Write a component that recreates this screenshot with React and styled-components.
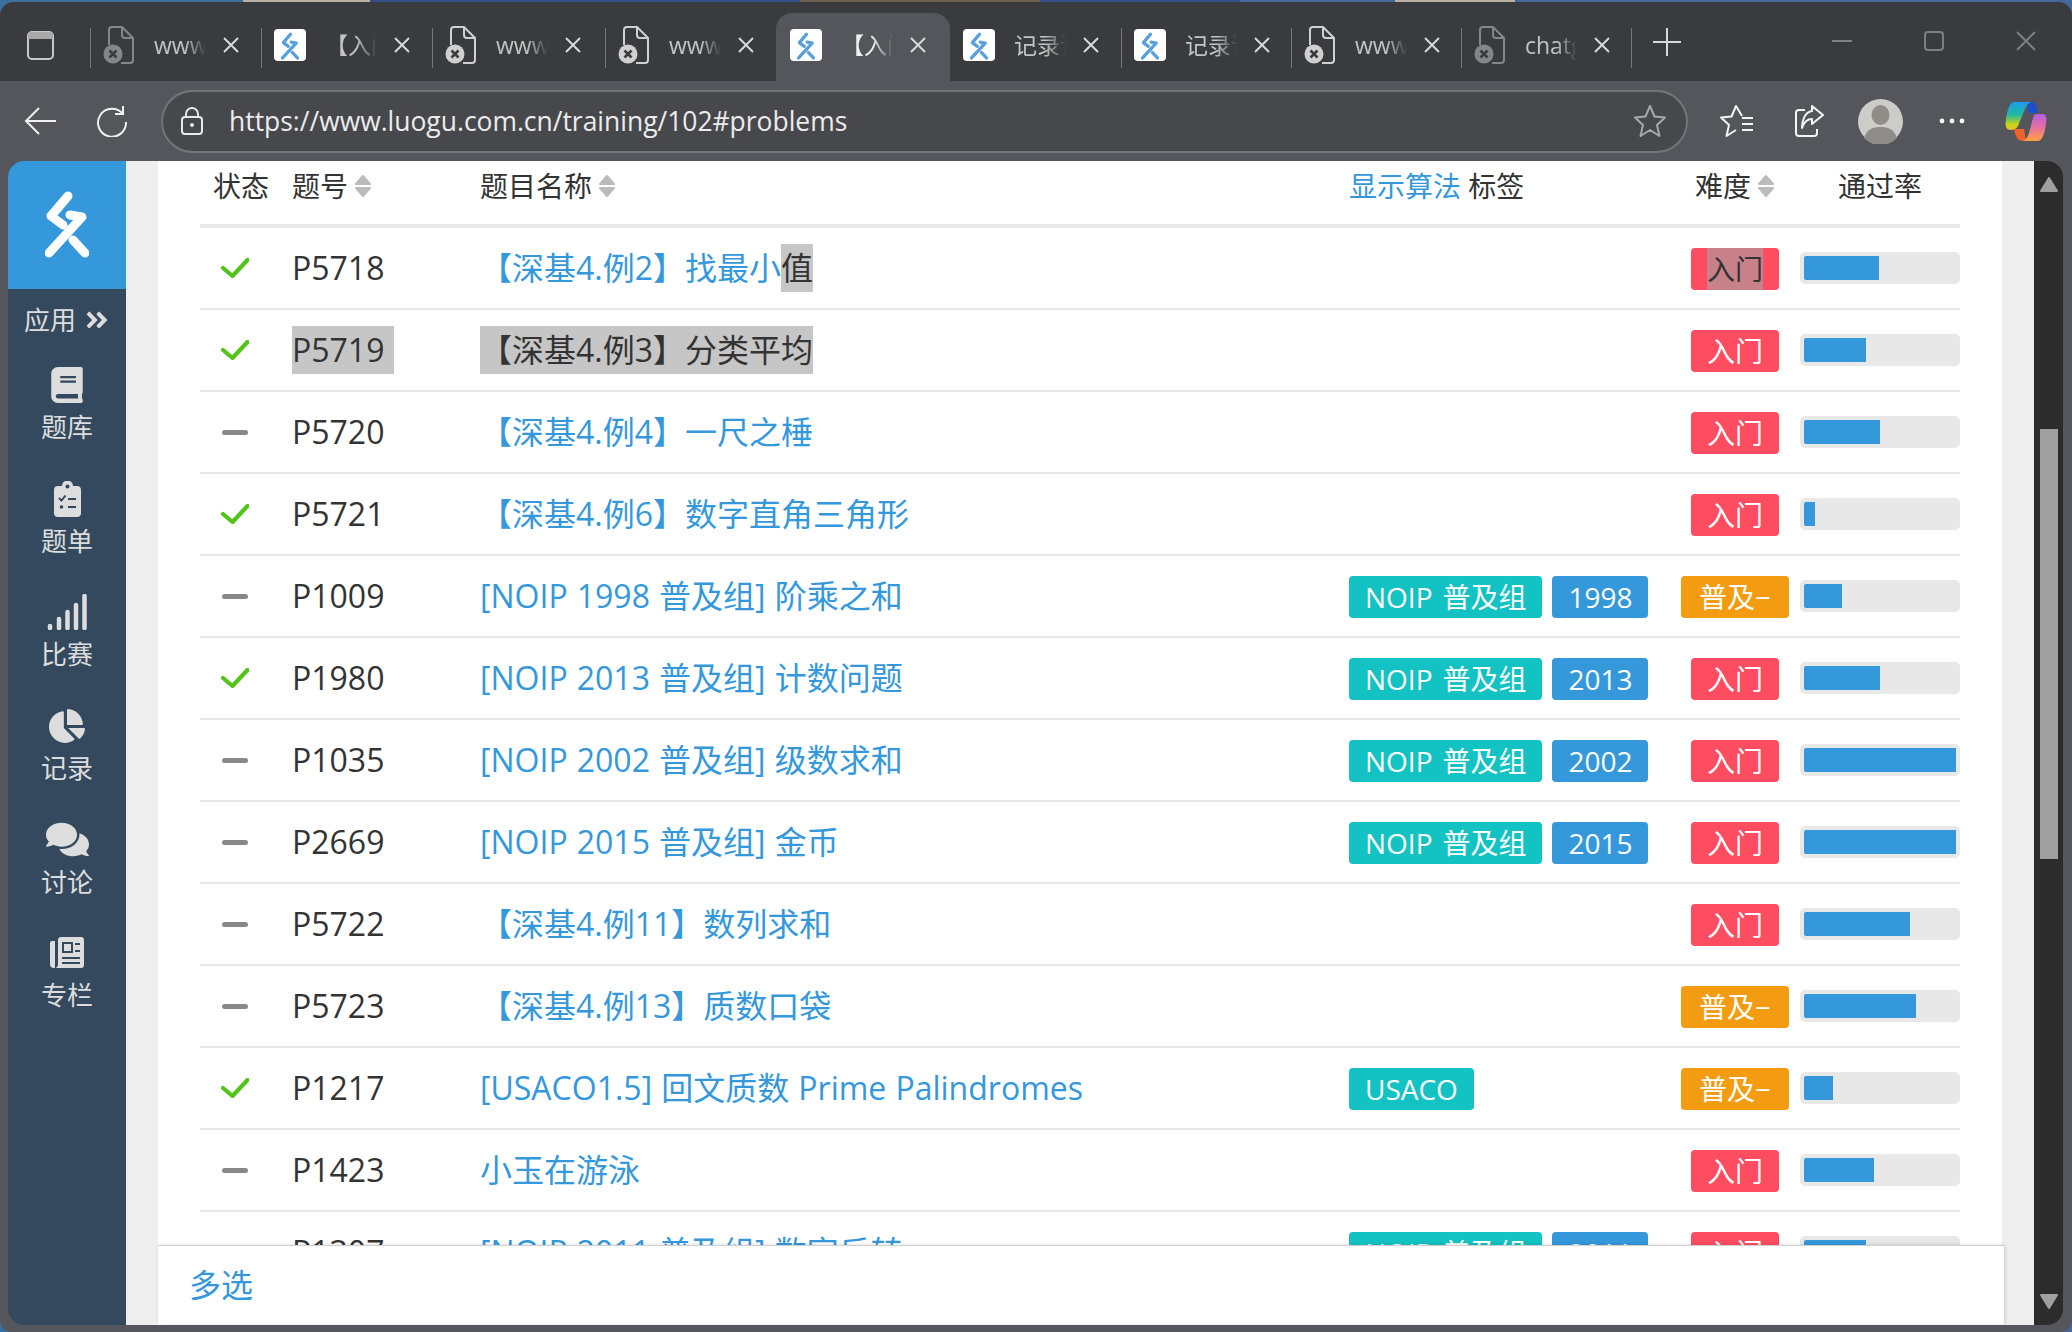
import styled, { createGlobalStyle } from "styled-components";
import { FaAngleDoubleRight, FaBook, FaChartPie, FaComments } from "react-icons/fa";

const GlobalStyle = createGlobalStyle`
  html, body {
    margin: 0;
    padding: 0;
    overflow: hidden;
  }
  * {
    box-sizing: border-box;
  }
`;

const Desktop = styled.div`
  width: 2072px;
  height: 1332px;
  padding-top: 2px;
  overflow: hidden;
  font-family: "Open Sans", "Noto Sans CJK SC", sans-serif;
  color: #333;
  background: linear-gradient(
    90deg,
    #3d6f9d 0 243px,
    #b8b0a0 243px 370px,
    #34508a 370px 800px,
    #6b5f50 800px 1040px,
    #34508a 1040px 1240px,
    #43689a 1240px 1395px,
    #b8b0a0 1395px 1515px,
    #43689a 1515px
  );
`;

const Window = styled.div`
  width: 100%;
  height: 1330px;
  display: flex;
  flex-direction: column;
  border-radius: 14px 14px 12px 12px;
  overflow: hidden;
  background: #55565b;
`;

/* tab strip */
const TabBar = styled.div`
  height: 79px;
  flex-shrink: 0;
  display: flex;
  align-items: flex-end;
  padding-left: 27px;
  background: #3a3b3f;
`;

const PanelButton = styled.svg`
  width: 27px;
  height: 29px;
  margin-right: 36px;
  align-self: flex-start;
  margin-top: 29px;
`;

const Tab = styled.div`
  position: relative;
  width: ${(p) => p.$w}px;
  height: 68px;
  flex-shrink: 0;
  display: flex;
  align-items: flex-start;
  padding: 16px 0 0 ${(p) => (p.$active ? 14 : 13)}px;
  border-radius: 16px 16px 0 0;
  background: ${(p) => (p.$active ? "#55565b" : "transparent")};
  color: ${(p) => (p.$active ? "#f0f0f0" : "#c4c4c4")};

  &::before {
    content: "";
    display: ${(p) => (p.$sep ? "block" : "none")};
    position: absolute;
    left: 0;
    top: 15px;
    width: 1px;
    height: 40px;
    background: #77787c;
  }
`;

const FaviconBox = styled.div`
  width: 32px;
  height: 32px;
  flex-shrink: 0;
  display: flex;
  align-items: center;
  justify-content: center;
  border-radius: 4px;
  background: #fff;
`;

const TabTitle = styled.div`
  width: 52px;
  margin-left: 19px;
  flex-shrink: 0;
  overflow: hidden;
  white-space: nowrap;
  font-size: 23px;
  line-height: 32px;
  -webkit-mask-image: linear-gradient(90deg, #000 60%, transparent 100%);
  mask-image: linear-gradient(90deg, #000 60%, transparent 100%);
`;

const CloseIcon = styled.svg`
  width: 18px;
  height: 18px;
  margin: 7px 0 0 16px;
  flex-shrink: 0;
`;

const NewTab = styled.div`
  position: relative;
  width: 72px;
  height: 68px;
  flex-shrink: 0;
  display: flex;
  justify-content: center;
  padding-top: 15px;

  &::before {
    content: "";
    position: absolute;
    left: 0;
    top: 15px;
    width: 1px;
    height: 40px;
    background: #77787c;
  }
`;

const WindowButtons = styled.div`
  margin-left: auto;
  align-self: flex-start;
  margin-top: 19px;
  display: flex;
`;

const WindowButton = styled.div`
  width: 92px;
  height: 40px;
  display: flex;
  align-items: center;
  justify-content: center;
`;

/* address row */
const Toolbar = styled.div`
  height: 80px;
  flex-shrink: 0;
  display: flex;
  align-items: center;
  padding-left: 24px;
  background: #55565b;
`;

const ToolIcon = styled.svg`
  flex-shrink: 0;
  margin-left: ${(p) => p.$ml || 0}px;
`;

const AddressBar = styled.div`
  width: 1527px;
  height: 63px;
  margin-left: 33px;
  flex-shrink: 0;
  display: flex;
  align-items: center;
  padding: 0 20px 0 17px;
  border: 2px solid #747579;
  border-radius: 32px;
  background: #47484c;
`;

const Url = styled.div`
  flex: 1;
  margin-left: 25px;
  font-size: 26.45px;
  color: #ececec;
`;

/* page area */
const Body = styled.div`
  flex: 1;
  min-height: 0;
  display: flex;
  padding: 0 9px 7px 8px;
`;

const Sidebar = styled.nav`
  width: 118px;
  flex-shrink: 0;
  display: flex;
  flex-direction: column;
  border-radius: 16px 0 0 16px;
  overflow: hidden;
  background: #34495e;
  color: #ddd;
`;

const LogoBlock = styled.div`
  height: 128px;
  flex-shrink: 0;
  display: flex;
  align-items: center;
  justify-content: center;
  padding-bottom: 4px;
  background: #3498db;
`;

const AppsRow = styled.div`
  height: 71px;
  flex-shrink: 0;
  display: flex;
  align-items: center;
  justify-content: center;
  gap: 8px;
  padding-bottom: 9px;
  font-size: 26px;
  line-height: 32px;
`;

const NavItem = styled.div`
  height: 113.7px;
  flex-shrink: 0;
  display: flex;
  flex-direction: column;
  align-items: center;
  padding-top: 7px;
`;

const NavIcon = styled.div`
  height: 36px;
  display: flex;
  align-items: center;
  justify-content: center;
`;

const NavLabel = styled.div`
  margin-top: 8px;
  font-size: 26px;
  line-height: 32px;
`;

const Content = styled.main`
  position: relative;
  flex: 1;
  min-width: 0;
  padding: 0 32px;
  overflow: hidden;
  background: #eee;
`;

const Card = styled.div`
  height: 100%;
  padding: 0 42px;
  background: #fff;
  overflow: hidden;
`;

const Columns = styled.div`
  display: grid;
  grid-template-columns: 92px 188px 869px 331px 120px 160px;
  align-items: center;
`;

const HeadRow = styled(Columns)`
  height: 67px;
  padding-bottom: 14px;
  border-bottom: 4px solid #e8e8e8;
  font-size: 28px;
  line-height: 38px;
`;

const HeadCell = styled.div`
  display: flex;
  align-items: center;
  justify-content: ${(p) => (p.$center ? "center" : "flex-start")};
  padding-left: ${(p) => p.$pl || 0}px;
  padding-right: ${(p) => p.$pr || 0}px;
  gap: ${(p) => p.$gap || 0}px;
  white-space: pre;
`;

const BlueText = styled.span`
  color: #3498db;
`;

const Row = styled(Columns)`
  height: 82px;
  border-bottom: 2px solid #e8e8e8;
  font-size: 32px;
  line-height: 48px;
  word-spacing: 0.8px;
`;

const StatusCell = styled.div`
  width: 70px;
  display: flex;
  justify-content: center;
`;

const Dash = styled.div`
  width: 26px;
  height: 5px;
  border-radius: 3px;
  background: #888;
`;

const NumberCell = styled.div`
  white-space: pre;
`;

const Picked = styled.span`
  display: inline-block;
  background: #c6c6c6;
  color: #333;
  height: 48px;
  white-space: pre;
`;

const TitleLink = styled.div`
  color: #3498db;
  white-space: nowrap;
`;

const TagCell = styled.div`
  display: flex;
  gap: 10px;
  padding-top: 2px;
`;

const Chip = styled.span`
  display: inline-block;
  height: 42px;
  padding: 0 ${(p) => p.$px || 16}px;
  border-radius: 4px;
  font-size: 28px;
  line-height: 42px;
  word-spacing: 2.6px;
  color: #fff;
  background: ${(p) => p.$bg};
  white-space: nowrap;
`;

const PickedChipText = styled.span`
  display: inline-block;
  height: 42px;
  background: #c88089;
  color: #333;
`;

const DiffCell = styled.div`
  display: flex;
  justify-content: center;
  padding-right: 10px;
  padding-top: 2px;
`;

const RateBar = styled.div`
  height: 32px;
  padding: 4px;
  border-radius: 5px;
  background: #e8e8e8;
`;

const RateFill = styled.div`
  height: 24px;
  border-radius: 2px 0 0 2px;
  background: #3498db;
`;

const Footer = styled.div`
  position: absolute;
  left: 32px;
  right: 30px;
  bottom: 1px;
  height: 79px;
  display: flex;
  align-items: center;
  padding-left: 31px;
  padding-bottom: 4px;
  border-top: 1px solid #d0d0d0;
  background: #fff;
  box-shadow: 1px 0 4px rgba(0, 0, 0, 0.15);
  font-size: 32px;
  color: #3498db;
`;

const Scrollbar = styled.div`
  width: 29px;
  flex-shrink: 0;
  display: flex;
  flex-direction: column;
  align-items: center;
  padding: 16px 0;
  border-radius: 0 16px 16px 0;
  background: #2c2c2c;
`;

const Thumb = styled.div`
  width: 18px;
  height: 430px;
  margin-top: 236px;
  background: #a0a0a0;
`;

const ArrowDown = styled.svg`
  margin-top: auto;
`;

const Logo = ({ color = "#fff", width = 44, height = 70, sw = 9 }) => (
  <svg width={width} height={height} viewBox="15 8 44 70">
    <g fill="none" stroke={color} strokeWidth={sw} strokeLinecap="round" strokeLinejoin="round">
      <path d="M38 16 L21 36 L33 45" />
      <path d="M40 35 L52 37 L19 73" />
      <path d="M43 60 L55 73" />
    </g>
  </svg>
);

const FileIcon = ({ dim }) => (
  <svg width="32" height="40" viewBox="0 0 32 40" opacity={dim ? 0.5 : 1} style={{ flexShrink: 0, marginTop: -4 }}>
    <path d="M6 20 V5 a3 3 0 0 1 3-3 H19 L30 13 V35 a3 3 0 0 1-3 3 H18 M19 2 V10 a3 3 0 0 0 3 3 H30" fill="none" stroke="#d0d0d0" strokeWidth="2" />
    <circle cx="10" cy="29" r="9.5" fill="#d0d0d0" />
    <path d="M6.5 25.5 L13.5 32.5 M13.5 25.5 L6.5 32.5" stroke="#3a3b3f" strokeWidth="2.6" />
  </svg>
);

const Close = () => (
  <CloseIcon viewBox="0 0 18 18">
    <path d="M2 2 L16 16 M16 2 L2 16" stroke="#d8d8d8" strokeWidth="2" />
  </CloseIcon>
);

const STAR = "16,1 20.5,11.5 31,12.5 23,20 25.5,31 16,25 6.5,31 9,20 1,12.5 11.5,11.5";

const Copilot = () => (
  <ToolIcon $ml={38} width="44" height="42" viewBox="16 9 44 42">
    <defs>
      <linearGradient id="cpLeft" x1="0" y1="0" x2="0" y2="1">
        <stop offset="0" stopColor="#1d9bf0" />
        <stop offset="0.45" stopColor="#20b8a0" />
        <stop offset="0.8" stopColor="#c8d418" />
        <stop offset="1" stopColor="#e8c820" />
      </linearGradient>
      <linearGradient id="cpRight" x1="0" y1="0" x2="0" y2="1">
        <stop offset="0" stopColor="#b45ee0" />
        <stop offset="0.5" stopColor="#e870a0" />
        <stop offset="1" stopColor="#ffa040" />
      </linearGradient>
    </defs>
    <path d="M40 11 H44 Q48 11 50 22 H40 Z" fill="#1a50d0" />
    <path d="M26 38 H36 L38 50 H34 Q28 50 26 38 Z" fill="#f0602a" />
    <path d="M25 11 H43 Q39 12 36 20 L30 35 Q28 39 22 39 Q16 39 18 28 Q20 13 25 11 Z" fill="url(#cpLeft)" />
    <path d="M47 23 H54 Q60 23 58 33 Q56 48 51 50 H35 Q39 48 41 42 L45 27 Q46 24 47 23 Z" fill="url(#cpRight)" />
  </ToolIcon>
);

const TABS = [
  { w: 171, icon: "file", dim: true, title: "www.luogu" },
  { w: 171, icon: "logo", title: "【入门" },
  { w: 173, icon: "file", title: "www.luogu" },
  { w: 171, icon: "file", title: "www.luogu" },
  { w: 174, icon: "logo", title: "【入门", active: true },
  { w: 171, icon: "logo", title: "记录详情", nosep: true },
  { w: 170, icon: "logo", title: "记录详情" },
  { w: 170, icon: "file", title: "www.luogu" },
  { w: 170, icon: "file", dim: true, title: "chatgpt" },
];

const NAV = [
  { label: "题库", icon: <FaBook size={36} /> },
  {
    label: "题单",
    icon: (
      <svg width="27" height="36" viewBox="0 0 27 36">
        <path d="M4 5 H8 a5.5 5.5 0 0 1 11 0 H23 a4 4 0 0 1 4 4 V32 a4 4 0 0 1-4 4 H4 a4 4 0 0 1-4-4 V9 a4 4 0 0 1 4-4 Z" fill="#ddd" />
        <circle cx="13.5" cy="5.5" r="2" fill="#34495e" />
        <path d="M5 17 L7.5 19.5 L11.5 14.5 M14 18 H22 M14 26 H22" fill="none" stroke="#34495e" strokeWidth="2" />
        <circle cx="7.5" cy="26" r="1.8" fill="#34495e" />
      </svg>
    ),
  },
  {
    label: "比赛",
    icon: (
      <svg width="40" height="36" viewBox="0 0 40 36">
        <g stroke="#ddd" strokeWidth="4.5" strokeLinecap="round">
          <path d="M3 32 V34" />
          <path d="M12 25 V34" />
          <path d="M20.5 18 V34" />
          <path d="M29 11 V34" />
          <path d="M37.5 2 V34" />
        </g>
      </svg>
    ),
  },
  { label: "记录", icon: <FaChartPie size={36} /> },
  { label: "讨论", icon: <FaComments size={43} /> },
  {
    label: "专栏",
    icon: (
      <svg width="36" height="32" viewBox="0 0 36 32">
        <path d="M6 4 H3 a2 2 0 0 0-2 2 V27 a4 4 0 0 0 4 4 H6 Z" fill="#ddd" />
        <path d="M9 3 a3 3 0 0 1 3-3 H32 a3 3 0 0 1 3 3 V28 a3 3 0 0 1-3 3 H7 a4 4 0 0 0 2-4 Z" fill="#ddd" />
        <rect x="14" y="6" width="9" height="9" fill="none" stroke="#34495e" strokeWidth="2" />
        <path d="M26 7 H31 M26 14 H31 M13 21 H31 M13 26 H31" stroke="#34495e" strokeWidth="2" />
      </svg>
    ),
  },
];

const NOIP = "NOIP 普及组";

const PROBLEMS = [
  { id: "P5718", title: "【深基4.例2】找最小", titleEnd: "值", diff: "入门", rate: 49.5, ok: true, pickedDiff: true },
  { id: "P5719", title: "【深基4.例3】分类平均", diff: "入门", rate: 41, ok: true, picked: true },
  { id: "P5720", title: "【深基4.例4】一尺之棰", diff: "入门", rate: 50 },
  { id: "P5721", title: "【深基4.例6】数字直角三角形", diff: "入门", rate: 7, ok: true },
  { id: "P1009", title: "[NOIP 1998 普及组] 阶乘之和", tags: [NOIP, "1998"], diff: "普及−", rate: 25 },
  { id: "P1980", title: "[NOIP 2013 普及组] 计数问题", tags: [NOIP, "2013"], diff: "入门", rate: 50, ok: true },
  { id: "P1035", title: "[NOIP 2002 普及组] 级数求和", tags: [NOIP, "2002"], diff: "入门", rate: 100 },
  { id: "P2669", title: "[NOIP 2015 普及组] 金币", tags: [NOIP, "2015"], diff: "入门", rate: 100 },
  { id: "P5722", title: "【深基4.例11】数列求和", diff: "入门", rate: 70 },
  { id: "P5723", title: "【深基4.例13】质数口袋", diff: "普及−", rate: 74 },
  { id: "P1217", title: "[USACO1.5] 回文质数 Prime Palindromes", tags: ["USACO"], diff: "普及−", rate: 19, ok: true },
  { id: "P1423", title: "小玉在游泳", diff: "入门", rate: 46 },
  { id: "P1307", title: "[NOIP 2011 普及组] 数字反转", tags: [NOIP, "2011"], diff: "入门", rate: 41 },
];

const SortIcon = () => (
  <svg width="18" height="24" viewBox="0 0 18 24">
    <path d="M9 2 L16 10 H2 Z M2 14 H16 L9 22 Z" fill="#bbb" stroke="#bbb" strokeWidth="2" strokeLinejoin="round" />
  </svg>
);

const Check = () => (
  <svg width="28" height="20" viewBox="0 0 28 20">
    <path d="M2 10 L11.5 18 L26.5 2" fill="none" stroke="#52c41a" strokeWidth="4.2" strokeLinecap="round" strokeLinejoin="round" />
  </svg>
);

const isYear = (t) => /^\d+$/.test(t);

const App = () => {
  return (
    <Desktop>
      <GlobalStyle />
      <Window>
        <TabBar>
          <PanelButton viewBox="0 0 27 29">
            <rect x="1" y="1" width="25" height="27" rx="4" fill="none" stroke="#c8c8c8" strokeWidth="2" />
            <path d="M1 5 a4 4 0 0 1 4-4 H22 a4 4 0 0 1 4 4 V8 H1 Z" fill="#a8a8a8" />
          </PanelButton>
          {TABS.map((t, i) => (
            <Tab key={i} $w={t.w} $active={t.active} $sep={!t.active && !t.nosep}>
              {t.icon === "logo" ? (
                <FaviconBox>
                  <Logo color="#5aa0dc" width={20} height={29} sw={8} />
                </FaviconBox>
              ) : (
                <FileIcon dim={t.dim} />
              )}
              <TabTitle>{t.title}</TabTitle>
              <Close />
            </Tab>
          ))}
          <NewTab>
            <svg width="28" height="28" viewBox="0 0 28 28">
              <path d="M14 0 V28 M0 14 H28" stroke="#d8d8d8" strokeWidth="2" />
            </svg>
          </NewTab>
          <WindowButtons>
            <WindowButton>
              <svg width="20" height="4" viewBox="0 0 20 4">
                <path d="M0 2 H20" stroke="#7e7f83" strokeWidth="2" />
              </svg>
            </WindowButton>
            <WindowButton>
              <svg width="20" height="20" viewBox="0 0 20 20">
                <rect x="1" y="1" width="18" height="18" rx="3" fill="none" stroke="#7e7f83" strokeWidth="2" />
              </svg>
            </WindowButton>
            <WindowButton>
              <svg width="20" height="20" viewBox="0 0 20 20">
                <path d="M1 1 L19 19 M19 1 L1 19" stroke="#7e7f83" strokeWidth="2" />
              </svg>
            </WindowButton>
          </WindowButtons>
        </TabBar>

        <Toolbar>
          <ToolIcon width="32" height="28" viewBox="0 0 32 28">
            <path d="M15 1 L2 14 L15 27 M2 14 H32" fill="none" stroke="#f0f0f0" strokeWidth="2" />
          </ToolIcon>
          <ToolIcon $ml={40} width="32" height="32" viewBox="0 0 32 32">
            <path d="M27 9 A14 14 0 1 0 30 17 M27 1 V9 H19" fill="none" stroke="#f0f0f0" strokeWidth="2" />
          </ToolIcon>
          <AddressBar>
            <svg width="24" height="28" viewBox="0 0 24 28">
              <rect x="2" y="10" width="20" height="17" rx="3" fill="none" stroke="#e8e8e8" strokeWidth="2" />
              <path d="M6 10 V7 a6 6 0 0 1 12 0 V10" fill="none" stroke="#e8e8e8" strokeWidth="2" />
              <circle cx="12" cy="18" r="2" fill="#e8e8e8" />
            </svg>
            <Url>https://www.luogu.com.cn/training/102#problems</Url>
            <svg width="32" height="32" viewBox="0 0 32 32">
              <polygon points={STAR} fill="none" stroke="#a8a8a8" strokeWidth="2" strokeLinejoin="round" />
            </svg>
          </AddressBar>
          <ToolIcon $ml={32} width="34" height="32" viewBox="0 0 34 32">
            <path d="M22 11 L16 1 L11.5 11.5 L1 12.5 L9 20 L6.5 31 L16 25 M22 13 H33 M22 19 H33 M22 25 H33" fill="none" stroke="#f4f4f4" strokeWidth="2" strokeLinejoin="round" />
          </ToolIcon>
          <ToolIcon $ml={40} width="30" height="32" viewBox="0 0 30 32">
            <path d="M11 5 H5 a3 3 0 0 0-3 3 V28 a3 3 0 0 0 3 3 H20 a3 3 0 0 0 3-3 V24" fill="none" stroke="#f4f4f4" strokeWidth="2" />
            <path d="M18 1 L29 10 L18 19 V14 C13 14 10 17 8 23 C8 15 11 7 18 6 Z" fill="none" stroke="#f4f4f4" strokeWidth="2" strokeLinejoin="round" />
          </ToolIcon>
          <ToolIcon $ml={34} width="45" height="45" viewBox="0 0 45 45">
            <circle cx="22.5" cy="22.5" r="22.5" fill="#cdccc8" />
            <ellipse cx="22.5" cy="16" rx="9" ry="10" fill="#8f8d87" />
            <path d="M6 39 C9 30 15 28 22.5 28 C30 28 36 30 39 39 A22.5 22.5 0 0 1 6 39 Z" fill="#8f8d87" />
          </ToolIcon>
          <ToolIcon $ml={35} width="28" height="6" viewBox="0 0 28 6">
            <circle cx="4" cy="3" r="2.4" fill="#f4f4f4" />
            <circle cx="14" cy="3" r="2.4" fill="#f4f4f4" />
            <circle cx="24" cy="3" r="2.4" fill="#f4f4f4" />
          </ToolIcon>
          <Copilot />
        </Toolbar>

        <Body>
          <Sidebar>
            <LogoBlock>
              <Logo />
            </LogoBlock>
            <AppsRow>
              应用
              <FaAngleDoubleRight size={26} />
            </AppsRow>
            {NAV.map((n) => (
              <NavItem key={n.label}>
                <NavIcon>{n.icon}</NavIcon>
                <NavLabel>{n.label}</NavLabel>
              </NavItem>
            ))}
          </Sidebar>

          <Content>
            <Card>
              <HeadRow>
                <HeadCell $pl={13}>状态</HeadCell>
                <HeadCell $gap={6}>
                  题号
                  <SortIcon />
                </HeadCell>
                <HeadCell $gap={6}>
                  题目名称
                  <SortIcon />
                </HeadCell>
                <HeadCell>
                  <BlueText>显示算法</BlueText> 标签
                </HeadCell>
                <HeadCell $center $pr={10} $gap={6}>
                  难度
                  <SortIcon />
                </HeadCell>
                <HeadCell $center>通过率</HeadCell>
              </HeadRow>

              {PROBLEMS.map((p) => (
                <Row key={p.id}>
                  <StatusCell>{p.ok ? <Check /> : <Dash />}</StatusCell>
                  <NumberCell>{p.picked ? <Picked>{p.id + " "}</Picked> : p.id}</NumberCell>
                  <TitleLink>
                    {p.picked ? <Picked>{p.title}</Picked> : p.title}
                    {p.titleEnd && <Picked>{p.titleEnd}</Picked>}
                  </TitleLink>
                  <TagCell>
                    {(p.tags || []).map((t) => (
                      <Chip key={t} $bg={isYear(t) ? "#3498db" : "#13c2c2"}>
                        {t}
                      </Chip>
                    ))}
                  </TagCell>
                  <DiffCell>
                    <Chip $bg={p.diff === "入门" ? "#fe4c61" : "#f39c11"} $px={p.diff === "入门" ? 16 : 17.5}>
                      {p.pickedDiff ? <PickedChipText>{p.diff}</PickedChipText> : p.diff}
                    </Chip>
                  </DiffCell>
                  <RateBar>
                    <RateFill style={{ width: `${p.rate}%` }} />
                  </RateBar>
                </Row>
              ))}
            </Card>
            <Footer>多选</Footer>
          </Content>

          <Scrollbar>
            <svg width="20" height="16" viewBox="0 0 20 16">
              <path d="M10 1 L18 14 H2 Z" fill="#a0a0a0" stroke="#a0a0a0" strokeWidth="2" strokeLinejoin="round" />
            </svg>
            <Thumb />
            <ArrowDown width="20" height="16" viewBox="0 0 20 16">
              <path d="M2 2 H18 L10 15 Z" fill="#a0a0a0" stroke="#a0a0a0" strokeWidth="2" strokeLinejoin="round" />
            </ArrowDown>
          </Scrollbar>
        </Body>
      </Window>
    </Desktop>
  );
};

export default App;
